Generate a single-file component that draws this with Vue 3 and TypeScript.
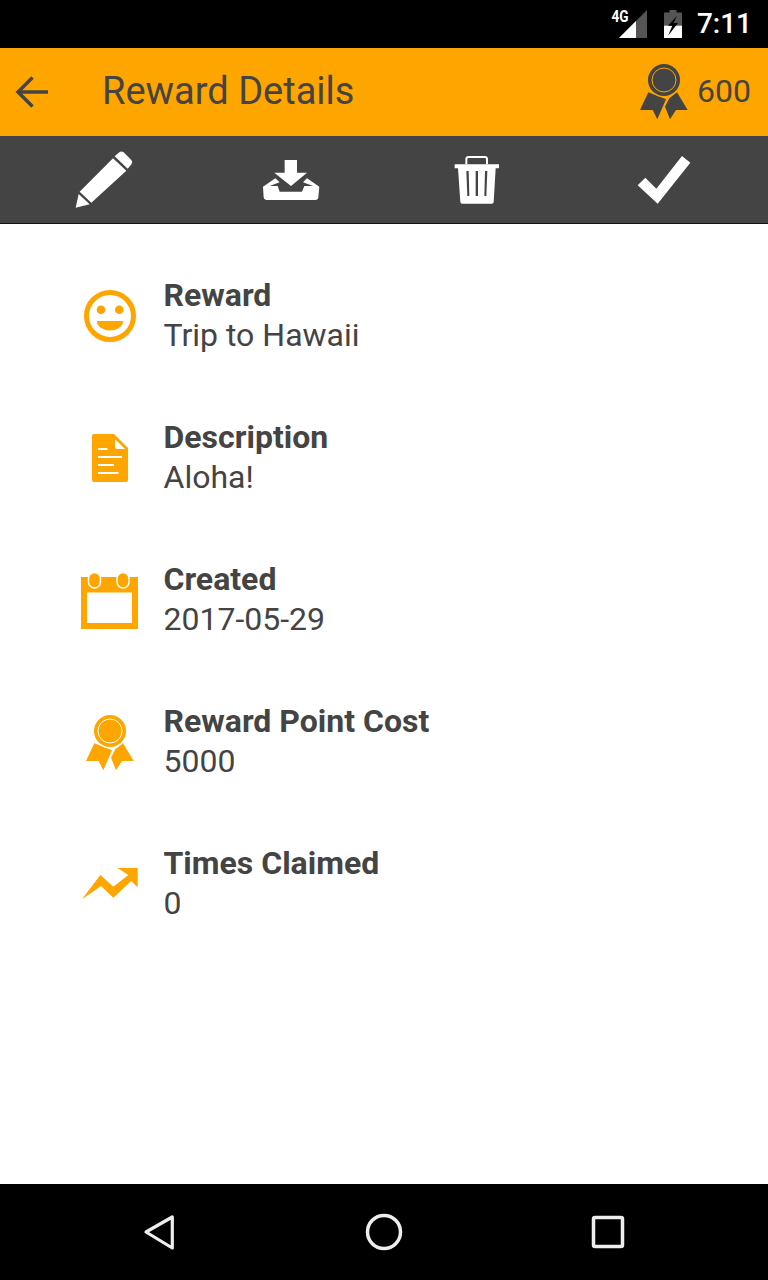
<script setup lang="ts">
type Detail = { icon: string; label: string; value: string };

const details: Detail[] = [
  { icon: 'smile', label: 'Reward', value: 'Trip to Hawaii' },
  { icon: 'doc', label: 'Description', value: 'Aloha!' },
  { icon: 'calendar', label: 'Created', value: '2017-05-29' },
  { icon: 'medal', label: 'Reward Point Cost', value: '5000' },
  { icon: 'trend', label: 'Times Claimed', value: '0' },
];
</script>

<template>
  <div class="screen">
    <div class="status-bar">
      <div class="signal">
        <span class="net">4G</span>
        <svg width="30" height="30" viewBox="0 0 30 30">
          <path d="M1 29 L29 1 V29 Z" fill="#555" />
          <path d="M1 29 L18 12 V29 Z" fill="#fff" />
        </svg>
      </div>
      <svg class="battery" width="18" height="28" viewBox="0 0 18 28">
        <path d="M5.500 0 H12.500 V2.500 H18 V28 H0 V2.500 H5.500 Z" fill="#555" />
        <path d="M0 15.700 H18 V28 H0 Z" fill="#fff" />
        <path d="M13 6 L4 15.700 H8.300 L4 25.700 L14 13 H9.500 Z" fill="#000" />
      </svg>
      <span class="time">7:11</span>
    </div>

    <header class="app-bar">
      <svg class="back" width="34" height="34" viewBox="0 0 34 34">
        <path d="M33 17 H3 M17.500 2.500 L3 17 L17.500 31.500" fill="none" stroke="#444" stroke-width="3.500" />
      </svg>
      <h1 class="title">Reward Details</h1>
      <svg class="points-icon" width="48" height="56" viewBox="0 0 48 56">
        <path d="M8.300 28.300 L0 46 H12.700 L17.300 55.300 L26 35.300 Z" fill="#444" />
        <path d="M37 28.300 L47.700 46 H36 L30 55.300 L25 42.700 L29.300 34.300 Z" fill="#444" />
        <circle cx="24" cy="16" r="17.200" fill="#ffa500" />
        <circle cx="24" cy="16" r="16" fill="#444" />
        <circle cx="24" cy="16" r="12" fill="none" stroke="#ffa500" stroke-width="1" />
      </svg>
      <span class="points">600</span>
    </header>

    <nav class="toolbar">
      <div class="tool">
        <svg width="60" height="60" viewBox="223 300 180 180">
          <path d="M228 473 L237 432 L270 463 Z M240 425 L340 325 L380 362 L275 458 Z" fill="#fff" />
          <path d="M345 319 L360 306 Q366 303 372 307 L395 330 Q400 336 396 342 L384 356 Z" fill="#fff" />
        </svg>
      </div>
      <div class="tool">
        <svg width="60" height="60" viewBox="782 300 180 180">
          <path d="M853 330 H890 V368 H920 L872 408 L822 368 H853 Z" fill="#fff" />
          <path d="M825 385 L838 397 L808 408 H832 L838 425 H905 L912 408 H938 L908 397 L920 385 L957 410 L954 442 Q953 450 945 450 H798 Q791 450 790 442 L788 410 Z" fill="#fff" />
        </svg>
      </div>
      <div class="tool">
        <svg width="60" height="60" viewBox="52 42 180 180">
          <path d="M110 85 V70 Q110 63 117 63 H165 Q172 63 172 70 V85" fill="none" stroke="#fff" stroke-width="6" />
          <path d="M75 85 H208 V97 H198 L192 198 Q192 203 186 203 H98 Q92 203 92 198 L85 97 H75 Z" fill="#fff" />
          <path d="M110 105 H117 L119 180 H113 Z M138 105 H145 V180 H138 Z M166 105 H173 L170 180 H164 Z" fill="#444" />
        </svg>
      </div>
      <div class="tool">
        <svg width="60" height="60" viewBox="611 42 180 180">
          <path d="M622 148 L645 125 L678 158 L755 60 L780 80 L682 203 Z" fill="#fff" />
        </svg>
      </div>
    </nav>

    <main class="details">
      <section v-for="item in details" :key="item.label" class="row">
        <div class="row-icon">
          <svg v-if="item.icon === 'smile'" width="54" height="54" viewBox="0 0 54 54">
            <circle cx="27" cy="27" r="23.500" fill="none" stroke="#ffa500" stroke-width="5" />
            <circle cx="18" cy="20.700" r="4.300" fill="#ffa500" />
            <circle cx="36.300" cy="20.700" r="4.300" fill="#ffa500" />
            <path d="M14 32 H40 A13 9.500 0 0 1 14 32 Z" fill="#ffa500" />
          </svg>
          <svg v-else-if="item.icon === 'doc'" width="36" height="48" viewBox="0 0 36 48">
            <path d="M2 0 H22 L36 14 V46 Q36 48 34 48 H2 Q0 48 0 46 V2 Q0 0 2 0 Z" fill="#ffa500" />
            <path d="M23 5 L33 15 H25 Q23 15 23 13 Z" fill="#fff" />
            <path d="M6 15 H15.500 M6 23 H30 M6 31 H22 M6 39 H26.500" stroke="#fff" stroke-width="2" />
          </svg>
          <svg v-else-if="item.icon === 'calendar'" width="58" height="57" viewBox="0 0 58 57">
            <path d="M0 5 H57 V57 H0 Z M6 20.500 V51 H51 V20.500 Z" fill="#ffa500" fill-rule="evenodd" />
            <rect x="7.500" y="0.500" width="12" height="15.500" rx="6" fill="#ffa500" stroke="#fff" stroke-width="1.500" />
            <rect x="36" y="0.500" width="12" height="15.500" rx="6" fill="#ffa500" stroke="#fff" stroke-width="1.500" />
          </svg>
          <svg v-else-if="item.icon === 'medal'" class="medal" width="48" height="56" viewBox="0 0 48 56">
            <path d="M8.300 28.300 L0 46 H12.700 L17.300 55.300 L26 35.300 Z" fill="#ffa500" />
            <path d="M37 28.300 L47.700 46 H36 L30 55.300 L25 42.700 L29.300 34.300 Z" fill="#ffa500" />
            <circle cx="24" cy="16" r="17.200" fill="#fff" />
            <circle cx="24" cy="16" r="16" fill="#ffa500" />
            <circle cx="24" cy="16" r="12" fill="none" stroke="#fff" stroke-width="1" />
          </svg>
          <svg v-else width="56" height="32" viewBox="36 504 168 96">
            <path d="M36 598 L91 525 L130 560 L175 525 L143 504 H203 V562 L183 543 L130 593 L93 558 Z" fill="#ffa500" />
          </svg>
        </div>
        <div class="row-text">
          <div class="label">{{ item.label }}</div>
          <div class="value">{{ item.value }}</div>
        </div>
      </section>
    </main>

    <footer class="nav-bar">
      <div class="nav-item">
        <svg width="48" height="48" viewBox="0 0 48 48">
          <path d="M10 24 L36.300 9 V40 Z" fill="none" stroke="#eee" stroke-width="3.200" stroke-linejoin="round" />
        </svg>
      </div>
      <div class="nav-item">
        <svg width="48" height="48" viewBox="0 0 48 48">
          <circle cx="24" cy="24" r="16.500" fill="none" stroke="#eee" stroke-width="3.500" />
        </svg>
      </div>
      <div class="nav-item">
        <svg width="48" height="48" viewBox="0 0 48 48">
          <rect x="9.500" y="9.500" width="29" height="29" rx="1.500" fill="none" stroke="#eee" stroke-width="3.500" />
        </svg>
      </div>
    </footer>
  </div>
</template>

<style>
html,
body {
  margin: 0;
  padding: 0;
  background: #fff;
}
</style>

<style scoped>
.screen {
  width: 768px;
  height: 1280px;
  display: flex;
  flex-direction: column;
  font-family: Roboto, 'Liberation Sans', sans-serif;
  color: #444;
  overflow: hidden;
}

.status-bar {
  height: 48px;
  flex: none;
  background: #000;
  display: flex;
  align-items: center;
  justify-content: flex-end;
  padding-right: 16px;
  box-sizing: border-box;
}
.signal {
  display: flex;
  align-items: center;
  position: relative;
  margin-right: 16px;
}
.net {
  position: absolute;
  left: -8px;
  top: 0;
  font-size: 16px;
  font-weight: 700;
  line-height: 16px;
  color: #fff;
  transform: scaleX(0.85);
}
.battery {
  margin-right: 15px;
}
.time {
  color: #fff;
  font-size: 28px;
  font-weight: 500;
  line-height: 48px;
}

.app-bar {
  height: 88px;
  flex: none;
  background: #ffa500;
  display: flex;
  align-items: center;
  padding: 0 17px 0 15px;
  box-sizing: border-box;
}
.back {
  flex: none;
}
.title {
  margin: 0 0 2px 53px;
  flex: 1;
  font-size: 38px;
  font-weight: 400;
  line-height: 86px;
}
.points-icon {
  flex: none;
  margin-right: 9px;
}
.points {
  font-size: 32px;
  margin-bottom: 2px;
}

.toolbar {
  height: 88px;
  flex: none;
  background: #444;
  border-bottom: 1px solid #111;
  box-sizing: border-box;
  display: grid;
  grid-template-columns: repeat(4, 1fr);
  padding: 0 11px;
}
.tool {
  display: flex;
  align-items: center;
  justify-content: center;
}

.details {
  flex: 1;
  background: #fff;
  padding: 49px 0 0 80px;
  display: flex;
  flex-direction: column;
  gap: 58px;
}
.row {
  display: flex;
  align-items: center;
  gap: 23.5px;
  height: 84px;
}
.row-icon {
  width: 60px;
  flex: none;
  display: flex;
  justify-content: center;
  align-items: center;
  margin-top: 2px;
}
.medal {
  margin-top: 2px;
}
.label {
  font-size: 32px;
  font-weight: 700;
  line-height: 40px;
}
.value {
  font-size: 32px;
  line-height: 40px;
}

.nav-bar {
  height: 96px;
  flex: none;
  background: #000;
  display: grid;
  grid-template-columns: repeat(3, 1fr);
  padding: 0 48px;
}
.nav-item {
  display: flex;
  align-items: center;
  justify-content: center;
}
</style>
